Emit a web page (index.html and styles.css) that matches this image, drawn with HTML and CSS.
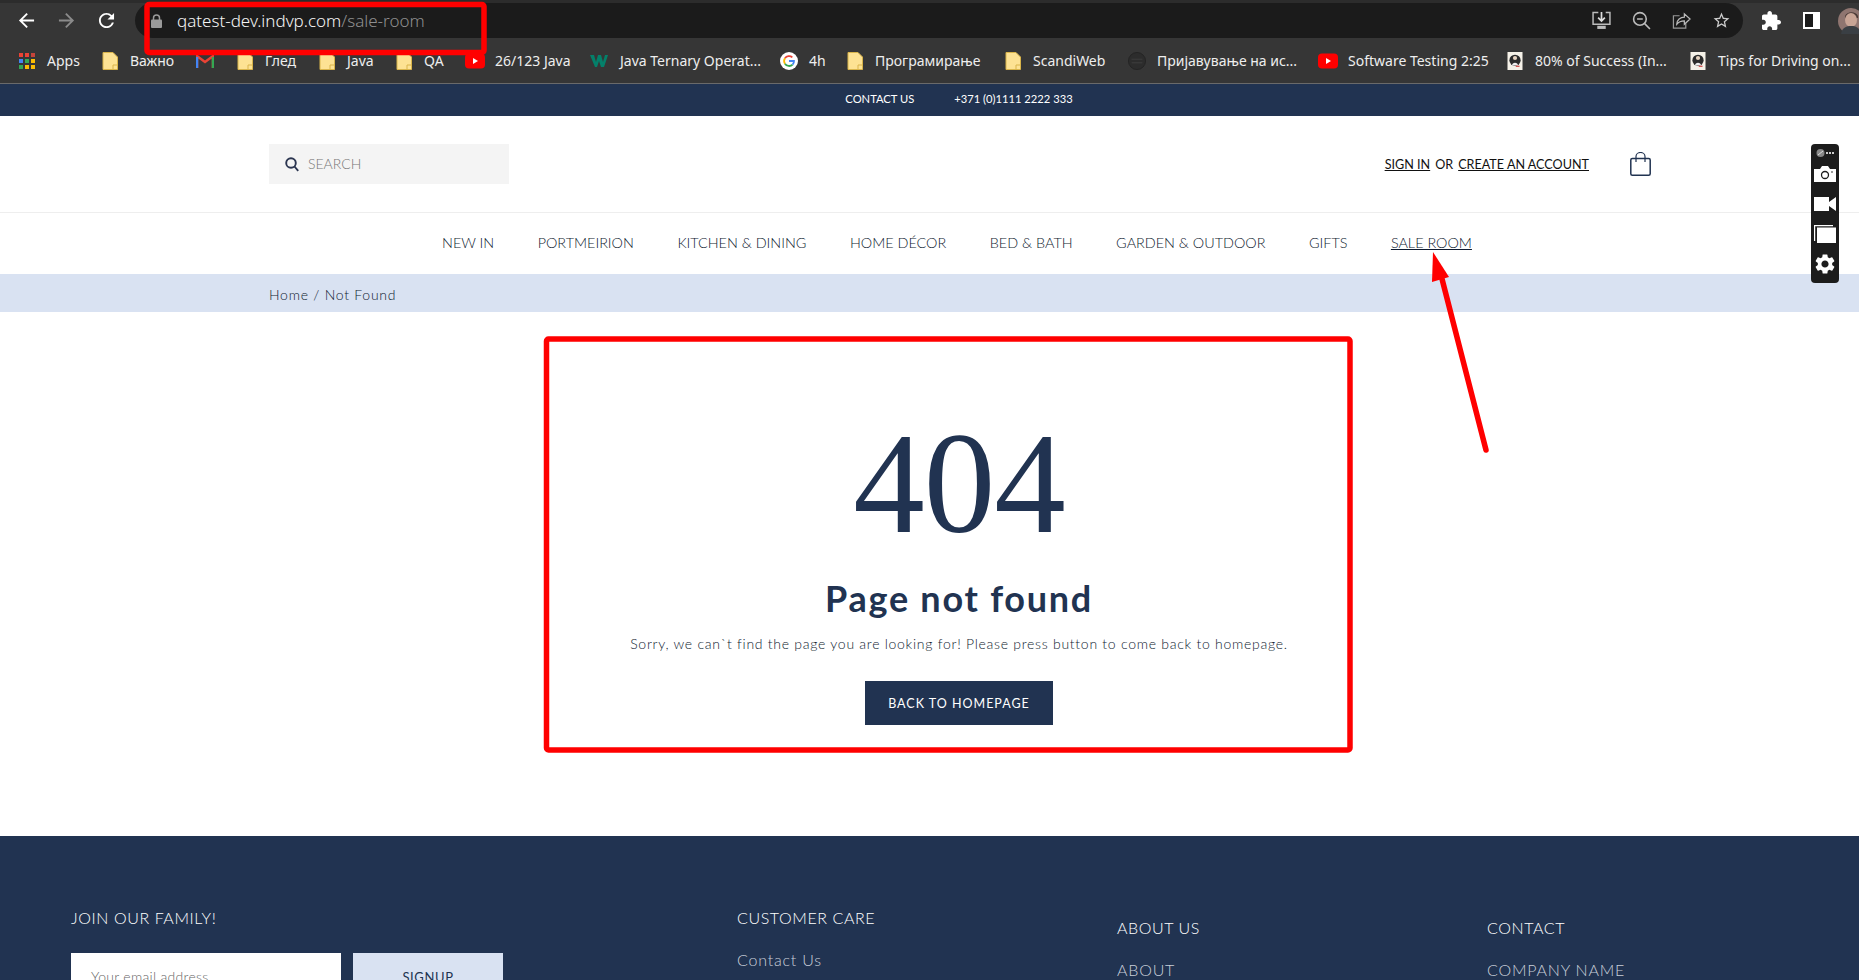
FILE: index.html
```html
<!DOCTYPE html>
<html lang="en">
<head>
    <meta charset="UTF-8" />
    <title>Not Found</title>
    <link rel="stylesheet" href="styles.css">
</head>
<body>
<svg class="defs" width="0" height="0">
    <symbol id="folder" viewBox="0 0 16 18"><path d="M1 .5h10l4.500 4.500v12.500H1z" fill="#fde293" stroke="#d9b44a"/><path d="M11 17.500V13h4.500" fill="none" stroke="#d9b44a"/></symbol>
    <symbol id="yt" viewBox="0 0 20 16"><rect width="20" height="15" y=".5" rx="4" fill="#f00"/><path d="M8 5l5 3-5 3z" fill="#fff"/></symbol>
    <symbol id="thumb" viewBox="0 0 20 24"><rect width="20" height="24" fill="#f5f1e8"/><circle cx="10" cy="11" r="7.500" fill="#2b2b2b"/><circle cx="10" cy="8" r="2.800" fill="#e6d3c0"/><path d="M6 18c0-5 8-5 8 0z" fill="#eee"/><path d="M11 19h5" stroke="#c33" stroke-width="1.500"/></symbol>
</svg>

<div class="browser">
    <div class="toolbar">
        <div class="nav-btns">
            <svg class="ic" viewBox="3 3 18 18"><path d="M20 11H7.830l5.590-5.590L12 4l-8 8 8 8 1.410-1.410L7.830 13H20z" fill="#fff"/></svg>
            <svg class="ic" viewBox="3 3 18 18"><path d="M4 11h12.170l-5.590-5.590L12 4l8 8-8 8-1.410-1.410L16.170 13H4z" fill="#8b8b8b"/></svg>
            <svg class="ic" viewBox="3 3 18 18"><path d="M17.650 6.350A7.958 7.958 0 0 0 12 4c-4.420 0-7.990 3.580-7.990 8s3.570 8 7.990 8c3.730 0 6.840-2.550 7.730-6h-2.080A5.990 5.990 0 0 1 12 18c-3.310 0-6-2.690-6-6s2.690-6 6-6c1.660 0 3.140.690 4.220 1.780L13 11h7V4z" fill="#fff"/></svg>
        </div>
        <div class="omnibox">
            <svg class="lock" viewBox="0 0 11 14"><path d="M2.500 6V4a3 3 0 0 1 6 0v2" fill="none" stroke="#9a9a9a" stroke-width="1.500"/><rect y="5.500" width="11" height="8.500" rx="1" fill="#9a9a9a"/></svg>
            <span class="url">qatest-dev.indvp.com<span class="url-path">/sale-room</span></span>
            <div class="omni-icons">
                <svg class="ic-o" viewBox="0 0 18 18"><path d="M6 1.500H1v11h16v-11h-4" fill="none" stroke="#bbb" stroke-width="1.400"/><path d="M9 1v8M5.800 6.200L9 9.500l3.200-3.300" fill="none" stroke="#ddd" stroke-width="1.600"/><rect x="5" y="14" width="8" height="3" fill="#bbb"/></svg>
                <svg class="ic-o" viewBox="0 0 18 18"><circle cx="7.500" cy="7.500" r="6" fill="none" stroke="#bbb" stroke-width="1.500"/><path d="M4.800 7.500h5.400M12 12l5 5" stroke="#bbb" stroke-width="1.500"/></svg>
                <svg class="ic-o" viewBox="0 0 20 18"><path d="M8 4H1.500v13h13v-5" fill="none" stroke="#999" stroke-width="1.300"/><path d="M5 13c0-5 4-7.500 8-7.500V2l6 5.500-6 5.500V9.500c-4 0-6 1-8 3.500z" fill="none" stroke="#bbb" stroke-width="1.300"/></svg>
                <svg class="ic-o" viewBox="0 0 24 24"><path d="M22 9.240l-7.190-.620L12 2 9.190 8.630 2 9.240l5.460 4.730L5.820 21 12 17.270 18.180 21l-1.630-7.030zM12 15.400l-3.760 2.270 1-4.280-3.320-2.880 4.380-.380L12 6.100l1.710 4.040 4.380.380-3.320 2.880 1 4.280z" fill="#ccc"/></svg>
            </div>
        </div>
        <svg class="puzzle" viewBox="2 1 21 21"><path d="M20.500 11H19V7c0-1.100-.9-2-2-2h-4V3.500C13 2.120 11.880 1 10.500 1S8 2.120 8 3.500V5H4c-1.100 0-1.990.9-1.990 2v3.800H3.500c1.490 0 2.700 1.210 2.700 2.700s-1.210 2.700-2.700 2.700H2V20c0 1.100.9 2 2 2h3.800v-1.500c0-1.490 1.210-2.700 2.700-2.700 1.490 0 2.700 1.210 2.700 2.700V22H17c1.100 0 2-.9 2-2v-4h1.500c1.380 0 2.500-1.120 2.500-2.500S21.880 11 20.500 11z" fill="#fff"/></svg>
        <div class="sidepanel"></div>
        <svg class="avatar" viewBox="0 0 26 26"><circle cx="13" cy="13" r="13" fill="#8f7570"/><path d="M7 8c2-5 11-5 13 0v2H7z" fill="#4a3a36"/><ellipse cx="13" cy="12" rx="6" ry="7" fill="#c9a596"/><path d="M3 26c1-7 6-8 10-8s9 1 10 8z" fill="#3a3f44"/></svg>
    </div>

    <div class="bookmarks">
        <div class="bm">
            <svg class="bm-icon" viewBox="0 0 16 16">
                <rect width="4" height="4" fill="#ea4335"/><rect x="6" width="4" height="4" fill="#ea4335"/><rect x="12" width="4" height="4" fill="#c5443a"/>
                <rect y="6" width="4" height="4" fill="#4285f4"/><rect x="6" y="6" width="4" height="4" fill="#34a853"/><rect x="12" y="6" width="4" height="4" fill="#fbbc04"/>
                <rect y="12" width="4" height="4" fill="#34a853"/><rect x="6" y="12" width="4" height="4" fill="#fbbc04"/><rect x="12" y="12" width="4" height="4" fill="#fbbc04"/>
            </svg>Apps
        </div>
        <div class="bm"><svg class="bm-icon"><use href="#folder"/></svg>Важно</div>
        <div class="bm">
            <svg class="bm-icon bm-gmail" viewBox="0 0 18 14"><path d="M1 14V2l8 6 8-6v12" fill="none" stroke="#ea4335" stroke-width="2.500"/><path d="M1 14V3" stroke="#4285f4" stroke-width="2.500"/><path d="M17 14V3" stroke="#34a853" stroke-width="2.500"/></svg>
        </div>
        <div class="bm"><svg class="bm-icon"><use href="#folder"/></svg>Глед</div>
        <div class="bm"><svg class="bm-icon"><use href="#folder"/></svg>Java</div>
        <div class="bm"><svg class="bm-icon"><use href="#folder"/></svg>QA</div>
        <div class="bm bm-tight"><svg class="bm-icon bm-wide"><use href="#yt"/></svg>26/123 Java</div>
        <div class="bm bm-w3-item">
            <svg class="bm-icon bm-w3" viewBox="0 0 22 14"><path d="M0 1h4l2 7 2-7h3l2 7 2-7h3l-4 12h-3l-2-6-2 6H5z" fill="#04806a"/></svg>Java Ternary Operat...
        </div>
        <div class="bm bm-tight">
            <svg class="bm-icon bm-wide" viewBox="0 0 20 20"><circle cx="10" cy="10" r="10" fill="#fff"/><path d="M5.500 7A5.500 5.500 0 0 1 13.700 5.900" fill="none" stroke="#ea4335" stroke-width="2"/><path d="M5.500 7a5.500 5.500 0 0 0 0 6" fill="none" stroke="#fbbc04" stroke-width="2"/><path d="M5.500 13a5.500 5.500 0 0 0 8.500 1" fill="none" stroke="#34a853" stroke-width="2"/><path d="M14 14a5 5 0 0 0 1.500-4H10" fill="none" stroke="#4285f4" stroke-width="2"/></svg>4h
        </div>
        <div class="bm"><svg class="bm-icon"><use href="#folder"/></svg>Програмирање</div>
        <div class="bm"><svg class="bm-icon"><use href="#folder"/></svg>ScandiWeb</div>
        <div class="bm bm-tight">
            <svg class="bm-icon bm-wide" viewBox="0 0 20 20"><circle cx="10" cy="10" r="9.500" fill="#2c2c2c" stroke="#222"/><path d="M4 8h12M4 12h12" stroke="#3f3f3f"/></svg>Пријавување на ис...
        </div>
        <div class="bm bm-tight"><svg class="bm-icon bm-wide"><use href="#yt"/></svg>Software Testing 2:25</div>
        <div class="bm bm-tight"><svg class="bm-icon bm-wide"><use href="#thumb"/></svg>80% of Success (In...</div>
        <div class="bm bm-tight"><svg class="bm-icon bm-wide"><use href="#thumb"/></svg>Tips for Driving on...</div>
    </div>
</div>

<div class="topbar">
    <a>CONTACT US</a>
    <a>+371 (0)1111 2222 333</a>
</div>

<header class="head">
    <div class="search">
        <svg class="search-icon" viewBox="0 0 14 15"><circle cx="6" cy="6" r="4.800" fill="none" stroke="#2b3550" stroke-width="1.900"/><path d="M9.500 9.500l3.700 4.300" stroke="#2b3550" stroke-width="1.900"/></svg>
        <span class="search-text">SEARCH</span>
    </div>
    <div class="account">
        <a class="link">SIGN IN</a><span>OR</span><a class="link">CREATE AN ACCOUNT</a>
        <svg class="bag" viewBox="0 0 21 24"><rect x=".8" y="6.500" width="19.400" height="16.700" rx="1.500" fill="none" stroke="#213351" stroke-width="1.500"/><path d="M6 10V4.500a4.500 4 0 0 1 9 0V10" fill="none" stroke="#213351" stroke-width="1.200"/></svg>
    </div>
</header>

<nav class="menu">
    <a>NEW IN</a>
    <a>PORTMEIRION</a>
    <a>KITCHEN &amp; DINING</a>
    <a>HOME DÉCOR</a>
    <a>BED &amp; BATH</a>
    <a>GARDEN &amp; OUTDOOR</a>
    <a>GIFTS</a>
    <a class="current">SALE ROOM</a>
</nav>

<div class="crumbs">Home / Not Found</div>

<main class="notfound">
    <div class="big">404</div>
    <h1>Page not found</h1>
    <p>Sorry, we can`t find the page you are looking for! Please press button to come back to homepage.</p>
    <a class="btn">BACK TO HOMEPAGE</a>
</main>

<footer class="foot">
    <div class="col">
        <h4>JOIN OUR FAMILY!</h4>
        <div class="signup">
            <div class="email">Your email address</div>
            <div class="signup-btn">SIGNUP</div>
        </div>
    </div>
    <div class="col">
        <h4>CUSTOMER CARE</h4>
        <a>Contact Us</a>
    </div>
    <div class="col col-low">
        <h4>ABOUT US</h4>
        <a>ABOUT</a>
    </div>
    <div class="col col-low">
        <h4>CONTACT</h4>
        <a>COMPANY NAME</a>
    </div>
</footer>

<!-- screenshot markup on top of the page -->
<svg class="marks" viewBox="0 0 1859 980">
    <rect x="147" y="4.500" width="337" height="48" rx="2" fill="none" stroke="#f00" stroke-width="5.500"/>
    <rect x="546.500" y="339" width="803.500" height="411" rx="2" fill="none" stroke="#f00" stroke-width="5.500"/>
    <path d="M1486 450L1441 275" stroke="#f00" stroke-width="5.500" stroke-linecap="round"/>
    <path d="M1433 252L1432 282L1449 277z" fill="#f00"/>
</svg>

<div class="capture">
    <div class="capture-top">
        <svg width="9" height="10" viewBox="0 0 9 10"><circle cx="4.500" cy="5" r="4" fill="#888"/><path d="M2 7l5-4" stroke="#ddd"/></svg>
        <i></i><i></i><i></i>
    </div>
    <svg class="cap-ic cap-cam" viewBox="0 0 22 16"><path d="M0 3h6l2-3h6l2 3h6v13H0z" fill="#fff"/><circle cx="11" cy="9" r="3.500" fill="none" stroke="#1c1c1c" stroke-width="1.300"/><circle cx="18" cy="6" r=".8" fill="#1c1c1c"/></svg>
    <svg class="cap-ic cap-vid" viewBox="0 0 22 14"><path d="M0 0h15v5l7-5v14l-7-5v5H0z" fill="#fff"/></svg>
    <svg class="cap-ic cap-copy" viewBox="0 0 22 18"><path d="M.6 16V.6H19" fill="none" stroke="#fff" stroke-width="1.200"/><rect x="3" y="2.500" width="19" height="15.500" fill="#fff"/></svg>
    <svg class="cap-ic cap-gear" viewBox="2 2 20 20"><path d="M19.140 12.940c.04-.3.06-.61.06-.94 0-.32-.02-.64-.07-.94l2.030-1.580a.49.49 0 0 0 .12-.61l-1.920-3.320a.488.488 0 0 0-.59-.22l-2.390.96c-.5-.38-1.030-.7-1.620-.94l-.36-2.540a.484.484 0 0 0-.48-.41h-3.840c-.24 0-.43.17-.47.41l-.36 2.540c-.59.24-1.130.57-1.620.94l-2.390-.96c-.22-.08-.47 0-.59.22L2.740 8.870c-.12.21-.08.47.12.61l2.030 1.580c-.05.3-.09.63-.09.94s.02.64.07.94l-2.030 1.580a.49.49 0 0 0-.12.61l1.920 3.320c.12.22.37.29.59.22l2.390-.96c.5.38 1.030.7 1.620.94l.36 2.540c.05.24.24.41.48.41h3.840c.24 0 .44-.17.47-.41l.36-2.540c.59-.24 1.130-.56 1.620-.94l2.390.96c.22.08.47 0 .59-.22l1.920-3.320c.12-.22.07-.47-.12-.61zM12 15.600c-1.980 0-3.600-1.620-3.600-3.600s1.620-3.600 3.600-3.600 3.600 1.620 3.600 3.600-1.620 3.600-3.600 3.600z" fill="#fff"/></svg>
</div>
</body>
</html>
```

FILE: styles.css
```css
* {
    box-sizing: border-box;
}

html, body {
    margin: 0;
    height: 980px;
    overflow: hidden;
}

body {
    position: relative;
    background: #fff;
    color: #213351;
    font-family: Lato, "Liberation Sans", sans-serif;
}

a {
    color: inherit;
}

.defs {
    display: block;
    height: 0;
}

/* browser chrome */
.browser {
    height: 84px;
    background: #363636;
    border-bottom: 1px solid #6a6a6a;
    font-family: "Noto Sans", sans-serif;
    color: #eee;
}

.toolbar {
    display: flex;
    align-items: center;
    height: 38px;
    padding-top: 3px;
    padding-left: 18px;
    background: linear-gradient(#2c2c2c 3px, #363636 3px);
    overflow: hidden;
}

.nav-btns {
    display: flex;
    flex: none;
    gap: 23px;
}

.ic {
    width: 17px;
    height: 17px;
}

.omnibox {
    display: flex;
    flex: none;
    align-items: center;
    width: 1608px;
    height: 35px;
    margin-left: 20px;
    padding: 0 12px 0 16px;
    background: #1b1b1b;
    border-radius: 18px;
}

.lock {
    width: 11px;
    height: 14px;
    margin-right: 15px;
}

.url {
    font-size: 17px;
    color: #f5f5f5;
    font-weight: 300;
}

.url-path {
    color: #8f8f8f;
}

.omni-icons {
    display: flex;
    align-items: center;
    gap: 21px;
    margin-left: auto;
}

.ic-o {
    width: 19px;
    height: 19px;
}

.puzzle {
    flex: none;
    width: 19px;
    height: 19px;
    margin-left: 19px;
}

.sidepanel {
    flex: none;
    width: 17px;
    height: 17px;
    margin-left: 22px;
    border: 2px solid #fff;
    border-right-width: 7px;
    background: #1b1b1b;
}

.avatar {
    flex: none;
    width: 26px;
    height: 26px;
    margin-left: 18px;
}

/* one column per bookmark, so each keeps its own place in the bar */
.bookmarks {
    display: grid;
    grid-template-columns: 83px 94px 41px 82px 77px 69px 125px 189px 68px 158px 122px 191px 187px 183px 171px;
    align-items: center;
    height: 45px;
    padding-left: 19px;
    font-size: 14px;
    white-space: nowrap;
    overflow: hidden;
}

.bm {
    display: flex;
    align-items: center;
    gap: 12px;
}

.bm-tight {
    gap: 10px;
}

.bm-w3-item {
    gap: 8px;
}

.bm-icon {
    flex: none;
    width: 16px;
    height: 18px;
}

.bm-wide {
    width: 20px;
}

.bm-w3 {
    width: 22px;
}

.bm-gmail {
    width: 18px;
}

/* site header */
.topbar {
    display: flex;
    justify-content: center;
    align-items: center;
    gap: 40px;
    height: 32px;
    padding: 0 0 3px 59px;
    background: #213351;
    color: #fff;
    font-size: 11.200px;
    font-weight: 400;
}

.head {
    display: flex;
    align-items: center;
    justify-content: space-between;
    height: 97px;
    padding: 0 208px 0 269px;
    border-bottom: 1px solid #eee;
}

.search {
    display: flex;
    align-items: center;
    gap: 9px;
    width: 240px;
    height: 40px;
    padding-left: 16px;
    background: #f4f4f4;
    color: #777;
    font-size: 14px;
    font-weight: 300;
}

.search-icon {
    width: 14px;
    height: 15px;
}

.search-text {
    margin-bottom: 2px;
}

.account {
    display: flex;
    align-items: center;
    gap: 5px;
    font-size: 12.600px;
    color: #111;
}

.link {
    text-decoration: underline;
}

.bag {
    width: 21px;
    height: 24px;
    margin-left: 36px;
}

.menu {
    display: flex;
    justify-content: center;
    align-items: center;
    gap: 43.500px;
    height: 61px;
    padding: 0 0 3px 55px;
    color: #0f1b30;
    font-size: 14.400px;
    font-weight: 300;
}

.current {
    text-decoration: underline;
}

.crumbs {
    display: flex;
    align-items: center;
    height: 38px;
    padding: 2px 0 0 269px;
    background: #d9e2f2;
    font-size: 14px;
    font-weight: 300;
    letter-spacing: 0.75px;
    color: #0f1b30;
}

/* 404 block */
.notfound {
    display: flex;
    flex-direction: column;
    align-items: center;
    height: 524px;
    padding: 97px 0 0 59px;
    text-align: center;
}

.big {
    font-family: "Liberation Serif", serif;
    font-size: 143px;
    line-height: 150px;
    letter-spacing: -1px;
}

.notfound h1 {
    margin: 17px 0 0;
    font-size: 36px;
    line-height: 44px;
    font-weight: 700;
    letter-spacing: 1.75px;
}

.notfound p {
    margin: 14px 0 0;
    font-size: 14px;
    line-height: 20px;
    font-weight: 300;
    letter-spacing: 0.73px;
    color: #0f1b30;
}

.btn {
    display: flex;
    align-items: center;
    justify-content: center;
    width: 188px;
    height: 44px;
    margin-top: 27px;
    background: #213351;
    color: #fff;
    font-size: 12.500px;
    letter-spacing: 1px;
}

/* footer */
.foot {
    display: grid;
    grid-template-columns: 666px 380px 370px 1fr;
    height: 144px;
    padding: 72px 0 0 71px;
    background: #213351;
    color: #fff;
    font-weight: 300;
    overflow: hidden;
}

.col h4 {
    margin: 0 0 22px;
    font-size: 16px;
    line-height: 20px;
    font-weight: 300;
    letter-spacing: 0.6px;
}

.col a {
    display: block;
    font-size: 16px;
    line-height: 20px;
    color: #c9cfd9;
    letter-spacing: 0.8px;
}

.col-low {
    padding-top: 10px;
}

.signup {
    display: flex;
    gap: 12px;
    margin-top: 25px;
}

.email {
    width: 270px;
    height: 60px;
    padding: 15px 20px;
    background: #fff;
    color: #666;
    font-size: 14px;
    letter-spacing: 0.3px;
}

.signup-btn {
    width: 150px;
    height: 60px;
    padding-top: 16px;
    background: #d9e2f2;
    color: #213351;
    font-size: 13px;
    font-weight: 400;
    letter-spacing: 0.6px;
    text-align: center;
}

/* overlays */
.marks {
    position: absolute;
    top: 0;
    left: 0;
    width: 1859px;
    height: 980px;
    pointer-events: none;
}

.capture {
    position: absolute;
    top: 144px;
    left: 1811px;
    display: flex;
    flex-direction: column;
    align-items: center;
    width: 28px;
    height: 139px;
    padding-top: 4px;
    background: #1c1c1c;
    border-radius: 4px;
}

.capture-top {
    display: flex;
    align-items: center;
    gap: 1px;
    height: 10px;
}

.capture-top i {
    width: 2px;
    height: 2px;
    background: #ccc;
}

.cap-ic {
    width: 22px;
}

.cap-cam {
    height: 16px;
    margin-top: 8px;
}

.cap-vid {
    height: 14px;
    margin-top: 15px;
}

.cap-copy {
    height: 18px;
    margin-top: 14px;
}

.cap-gear {
    height: 20px;
    margin-top: 11px;
}
```
